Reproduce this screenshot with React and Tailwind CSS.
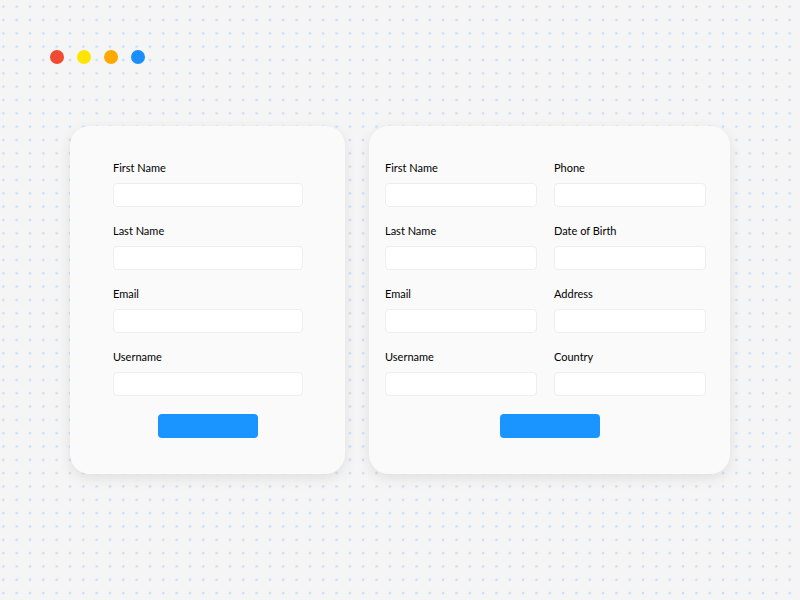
const leftFields = ["First Name", "Last Name", "Email", "Username"];
const rightFields = [
  ["First Name", "Phone"],
  ["Last Name", "Date of Birth"],
  ["Email", "Address"],
  ["Username", "Country"],
];

function Field({ label }) {
  return (
    <div className="flex flex-col gap-[8px]">
      <label className="h-[15px] pt-[1px] text-[11px] leading-[14px] text-black">{label}</label>
      <input className="h-[24px] w-full rounded-[4px] border border-[#eeeeee] bg-white outline-none" />
    </div>
  );
}

export default function App() {
  return (
    <div
      className="h-[600px] w-[800px] bg-[#f5f5f5] bg-[radial-gradient(circle,#c4defa_1.2px,transparent_1.6px)] bg-[size:13.333px_13.333px] bg-[position:-3.33px_0px] pl-[50px] pt-[50px]"
      style={{ fontFamily: "Lato, 'Open Sans', sans-serif" }}
    >
      <div className="flex gap-[13px]">
        <span className="h-[14px] w-[14px] rounded-full bg-[#f04a32]" />
        <span className="h-[14px] w-[14px] rounded-full bg-[#ffe500]" />
        <span className="h-[14px] w-[14px] rounded-full bg-[#ffa800]" />
        <span className="h-[14px] w-[14px] rounded-full bg-[#1a8ffb]" />
      </div>

      <div className="ml-[20px] mt-[62px] flex gap-[24px]">
        <div className="flex w-[275px] flex-col rounded-[20px] bg-[#fafafa] pb-[36px] pl-[43px] pr-[42px] pt-[34px] shadow-[0_4px_14px_rgba(0,0,0,0.09)]">
          <div className="flex flex-col gap-[16px]">
            {leftFields.map((f) => (
              <Field key={f} label={f} />
            ))}
          </div>
          <button className="ml-[45px] mt-[18px] h-[24px] w-[100px] rounded-[4px] bg-[#1a94ff]" />
        </div>

        <div className="flex w-[361px] flex-col rounded-[20px] bg-[#fafafa] pb-[36px] pl-[16px] pr-[24px] pt-[34px] shadow-[0_4px_14px_rgba(0,0,0,0.09)]">
          <div className="grid grid-cols-[152px_152px] gap-x-[17px] gap-y-[16px]">
            {rightFields.map(([a, b]) => [
              <Field key={a} label={a} />,
              <Field key={b} label={b} />,
            ])}
          </div>
          <button className="ml-[115px] mt-[18px] h-[24px] w-[100px] rounded-[4px] bg-[#1a94ff]" />
        </div>
      </div>
    </div>
  );
}
